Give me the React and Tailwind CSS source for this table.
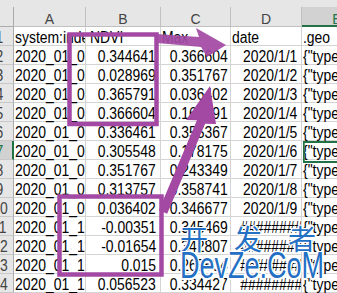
import React from 'react';

const GRID = 'grid grid-cols-[28px_72px_75px_70px_71px_70px]';

const rows = [
    { a: '2020_01_01_00000000000000000000', b: '0.344641', c: '0.366604', d: '2020/1/1' },
    { a: '2020_01_02_00000000000000000000', b: '0.028969', c: '0.351767', d: '2020/1/2' },
    { a: '2020_01_03_00000000000000000000', b: '0.365791', c: '0.036402', d: '2020/1/3' },
    { a: '2020_01_04_00000000000000000000', b: '0.366604', c: '0.162891', d: '2020/1/4' },
    { a: '2020_01_05_00000000000000000000', b: '0.336461', c: '0.355367', d: '2020/1/5' },
    { a: '2020_01_06_00000000000000000000', b: '0.305548', c: '0.178175', d: '2020/1/6', active: true },
    { a: '2020_01_07_00000000000000000000', b: '0.351767', c: '0.243349', d: '2020/1/7' },
    { a: '2020_01_08_00000000000000000000', b: '0.313757', c: '0.358741', d: '2020/1/8' },
    { a: '2020_01_09_00000000000000000000', b: '0.036402', c: '0.346677', d: '2020/1/9' },
    { a: '2020_01_10_00000000000000000000', b: '-0.00351', c: '0.345469', d: '########' },
    { a: '2020_01_11_00000000000000000000', b: '-0.01654', c: '0.342807', d: '########' },
    { a: '2020_01_12_00000000000000000000', b: '0.015', c: '0.265634', d: '########' },
    { a: '2020_01_13_00000000000000000000', b: '0.056523', c: '0.334427', d: '########' },
];

const Cell = ({ children, align = 'left', className = '' }) => (
    <div
        className={`relative h-[19px] overflow-x-clip whitespace-nowrap border-r border-b border-[#d4d4d4] pt-[2px] leading-[18px] ${
            align === 'right' ? 'pr-[4px] text-right' : 'pl-[1px]'
        } ${className}`}
    >
        <span className={`inline-block scale-x-[0.87] ${align === 'right' ? 'origin-right' : 'origin-left'}`}>
            {children}
        </span>
    </div>
);

const RowHead = ({ n, active }) => (
    <div
        className={`h-[19px] overflow-hidden border-b border-[#c8c8c8] pt-[2px] text-center leading-[18px] ${
            active
                ? 'border-r-2 border-r-[#217346] bg-[#d2d2d2] text-[#217346]'
                : 'border-r border-r-[#ababab] bg-[#e6e6e6] text-[#444]'
        }`}
    >
        <span className="inline-block scale-x-[0.87]">{n}</span>
    </div>
);

const ColHead = ({ label }) => (
    <div className="h-[20px] border-r border-b border-[#c0c0c0] bg-[#e6e6e6] pt-[4px] text-center text-[14px] leading-[16px] text-[#444]">
        {label}
    </div>
);

const Overlay = () => (
    <svg className="pointer-events-none absolute left-0 top-0" width="337" height="293">
        <rect x="69.5" y="34.5" width="87" height="89.5" fill="none" stroke="#a349a4" strokeWidth="4.5" />
        <rect x="59.5" y="196.5" width="102" height="78" fill="none" stroke="#a349a4" strokeWidth="4.5" />
        <polygon points="157,34 199,37 196,28 226,45 207,57 201,47 157,43" fill="#a349a4" fillOpacity="0.92" />
        <polygon
            points="158.9,210.3 196.9,120.3 186,120 210,86 216,124 205.1,123.7 167.2,213.7"
            fill="#a349a4"
        />
    </svg>
);

export default function App() {
    return (
        <div className="relative h-[293px] w-[337px] overflow-hidden bg-white font-['Liberation_Sans',Arial,sans-serif] text-[16px] text-black">
            <div className="-ml-[14px] w-[386px]">
                <div className="h-[7px] bg-[#e6e6e6]" />

                {/* column letters */}
                <div className={GRID}>
                    <div className="h-[20px] border-r border-b border-[#ababab] bg-[#e6e6e6]" />
                    {['A', 'B', 'C', 'D'].map((l) => (
                        <ColHead key={l} label={l} />
                    ))}
                    <div className="h-[20px] border-b-2 border-[#217346] bg-[#d2d2d2] pt-[4px] text-center text-[14px] leading-[16px] text-[#217346]">
                        E
                    </div>
                </div>

                {/* field names */}
                <div className={GRID}>
                    <RowHead n={1} />
                    <Cell>system:index</Cell>
                    <Cell className="!pl-[4px]">NDVI</Cell>
                    <Cell>Max</Cell>
                    <Cell>date</Cell>
                    <Cell>.geo</Cell>
                </div>

                {rows.map((r, i) => (
                    <div key={i} className={GRID}>
                        <RowHead n={i + 2} active={r.active} />
                        <Cell>{r.a}</Cell>
                        <Cell align="right">{r.b}</Cell>
                        <Cell align="right">{r.c}</Cell>
                        <Cell align="right">{r.d}</Cell>
                        <Cell>
                            {'{"type":"Polygon","coordinates":[]}'}
                            {r.active && (
                                <div className="absolute left-0 -top-[2px] h-[22px] w-[80px] border-2 border-[#217346]" />
                            )}
                        </Cell>
                    </div>
                ))}
            </div>

            <Overlay />

            {/* watermark */}
            <div className="absolute left-[180px] top-[223px] flex gap-[26px] font-['Noto_Sans_CJK_SC','Noto_Sans_CJK_JP',sans-serif] text-[28px] leading-[30px] text-[#2470c4] [text-shadow:1px_0_#fff,-1px_0_#fff,0_1px_#fff,0_-1px_#fff,1px_1px_#fff,-1px_-1px_#fff,1px_-1px_#fff,-1px_1px_#fff]">
                <span>开</span>
                <span>发</span>
                <span>者</span>
            </div>
            <div className="absolute left-[180px] top-[248px] origin-top scale-y-[1.38] whitespace-nowrap text-[27px] leading-[27px] text-[#2470c4] [text-shadow:1px_0_#fff,-1px_0_#fff,0_1px_#fff,0_-1px_#fff,1px_1px_#fff,-1px_-1px_#fff,1px_-1px_#fff,-1px_1px_#fff]">
                DevZe.CoM
            </div>
        </div>
    );
}
